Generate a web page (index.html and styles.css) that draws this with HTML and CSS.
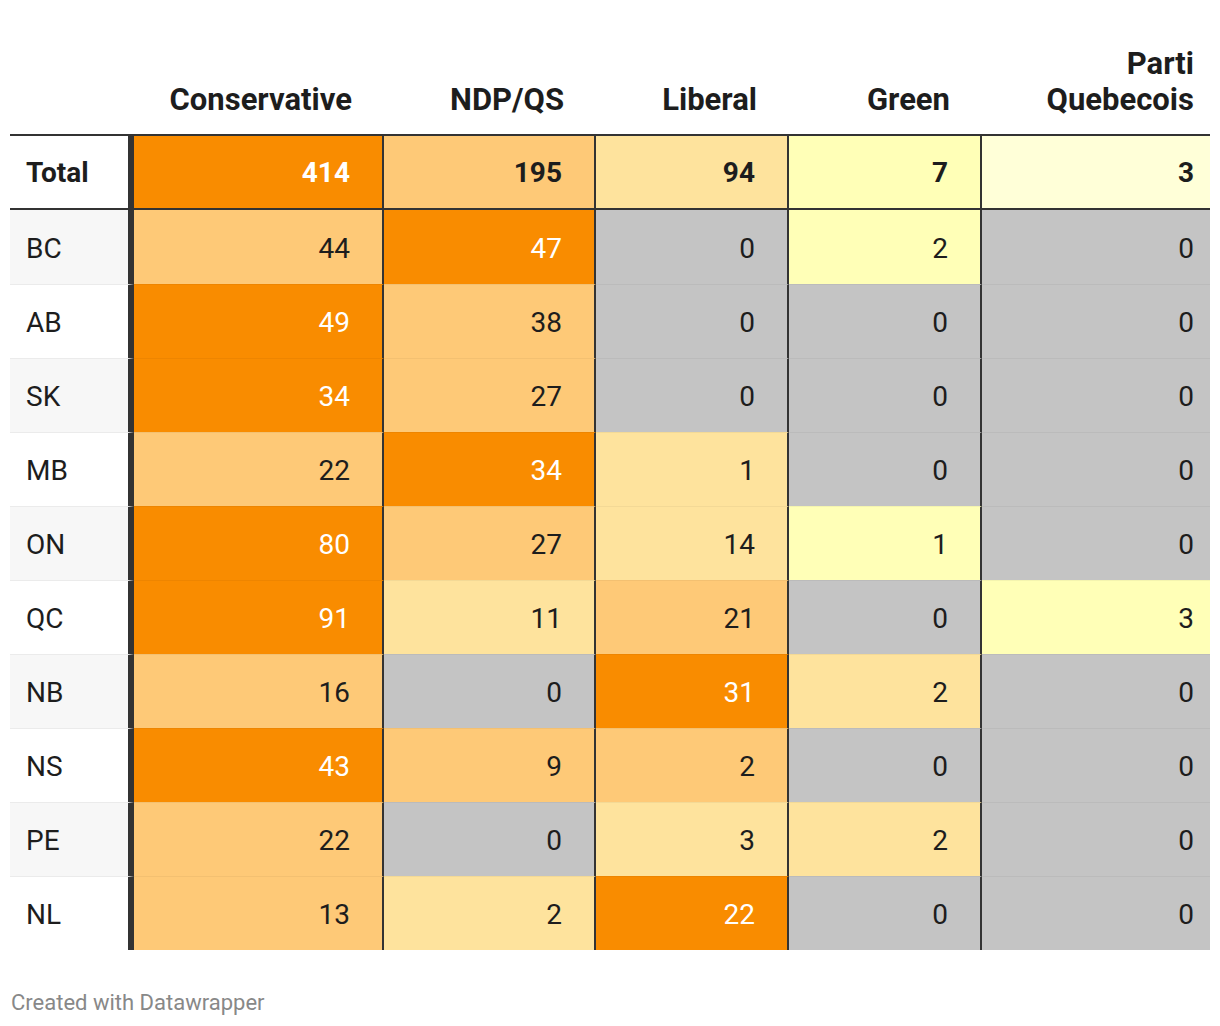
FILE: index.html
```html
<!DOCTYPE html>
<html lang="en">
<head>
<meta charset="utf-8">
<title>Seats by province</title>
<link rel="stylesheet" href="styles.css">
</head>
<body>
<div class="chart">
  <table class="seats">
    <colgroup>
      <col class="c-stub">
      <col class="c-cons">
      <col class="c-ndp">
      <col class="c-lib">
      <col class="c-grn">
      <col class="c-pq">
    </colgroup>
    <thead>
      <tr>
        <th class="stub"></th>
        <th>Conservative</th>
        <th>NDP/QS</th>
        <th>Liberal</th>
        <th>Green</th>
        <th class="last">Parti<br>Quebecois</th>
      </tr>
    </thead>
    <tbody>
      <tr class="total">
        <td class="stub">Total</td>
        <td class="v5 inv">414</td>
        <td class="v4">195</td>
        <td class="v3">94</td>
        <td class="v2">7</td>
        <td class="v1 last">3</td>
      </tr>
      <tr class="first alt">
        <td class="stub">BC</td>
        <td class="v4">44</td>
        <td class="v5 inv">47</td>
        <td class="v0">0</td>
        <td class="v2">2</td>
        <td class="v0 last">0</td>
      </tr>
      <tr>
        <td class="stub">AB</td>
        <td class="v5 inv">49</td>
        <td class="v4">38</td>
        <td class="v0">0</td>
        <td class="v0">0</td>
        <td class="v0 last">0</td>
      </tr>
      <tr class="alt">
        <td class="stub">SK</td>
        <td class="v5 inv">34</td>
        <td class="v4">27</td>
        <td class="v0">0</td>
        <td class="v0">0</td>
        <td class="v0 last">0</td>
      </tr>
      <tr>
        <td class="stub">MB</td>
        <td class="v4">22</td>
        <td class="v5 inv">34</td>
        <td class="v3">1</td>
        <td class="v0">0</td>
        <td class="v0 last">0</td>
      </tr>
      <tr class="alt">
        <td class="stub">ON</td>
        <td class="v5 inv">80</td>
        <td class="v4">27</td>
        <td class="v3">14</td>
        <td class="v2">1</td>
        <td class="v0 last">0</td>
      </tr>
      <tr>
        <td class="stub">QC</td>
        <td class="v5 inv">91</td>
        <td class="v3">11</td>
        <td class="v4">21</td>
        <td class="v0">0</td>
        <td class="v2 last">3</td>
      </tr>
      <tr class="alt">
        <td class="stub">NB</td>
        <td class="v4">16</td>
        <td class="v0">0</td>
        <td class="v5 inv">31</td>
        <td class="v3">2</td>
        <td class="v0 last">0</td>
      </tr>
      <tr>
        <td class="stub">NS</td>
        <td class="v5 inv">43</td>
        <td class="v4">9</td>
        <td class="v4">2</td>
        <td class="v0">0</td>
        <td class="v0 last">0</td>
      </tr>
      <tr class="alt">
        <td class="stub">PE</td>
        <td class="v4">22</td>
        <td class="v0">0</td>
        <td class="v3">3</td>
        <td class="v3">2</td>
        <td class="v0 last">0</td>
      </tr>
      <tr>
        <td class="stub">NL</td>
        <td class="v4">13</td>
        <td class="v3">2</td>
        <td class="v5 inv">22</td>
        <td class="v0">0</td>
        <td class="v0 last">0</td>
      </tr>
    </tbody>
  </table>
  <div class="footer">Created with Datawrapper</div>
</div>
</body>
</html>
```

FILE: styles.css
```css
html, body {
  margin: 0;
  padding: 0;
  background: #ffffff;
}

body {
  font-family: Roboto, "Liberation Sans", Arial, sans-serif;
  color: #1d1d1d;
}

.chart {
  padding: 46px 10px 0 10px;
}

.seats {
  width: 1200px;
  table-layout: fixed;
  border-collapse: separate;
  border-spacing: 0;
  font-size: 28px;
  line-height: 36px;
}

.c-stub { width: 124px; }
.c-cons { width: 250px; }
.c-ndp  { width: 212px; }
.c-lib  { width: 193px; }
.c-grn  { width: 193px; }
.c-pq   { width: 228px; }

.seats th {
  font-size: 31px;
  font-weight: 700;
  text-align: right;
  vertical-align: bottom;
  padding: 0 32px 16px 16px;
  border-bottom: 2px solid #333333;
}

.seats th.last {
  padding-right: 16px;
}

.seats td {
  text-align: right;
  padding: 20px 32px 17px 16px;
  border-right: 2px solid #333333;
  border-top: 1px solid rgba(0, 0, 0, 0.045);
  font-variant-numeric: tabular-nums;
}

.seats td.last {
  padding-right: 16px;
  border-right: 0;
}

.seats td.stub {
  text-align: left;
  padding-left: 16px;
  border-right: 6px solid #333333;
  border-top-color: #ebebeb;
  background: #ffffff;
}

.seats tr.alt td.stub {
  background: #f7f7f7;
}

.seats tr.total td {
  font-weight: 700;
  border-top: 0;
  border-bottom: 2px solid #333333;
  padding-top: 19px;
  padding-bottom: 17px;
}

.seats tr.first td {
  border-top: 0;
  padding-top: 21px;
}

.v0 { background: #c4c4c4; }
.v1 { background: #ffffd8; }
.v2 { background: #ffffb7; }
.v3 { background: #fee39d; }
.v4 { background: #fec977; }
.v5 { background: #f98c00; }

.inv { color: #ffffff; }

.footer {
  margin-top: 38px;
  padding-left: 1px;
  font-size: 22px;
  line-height: 30px;
  color: #888888;
}
```
